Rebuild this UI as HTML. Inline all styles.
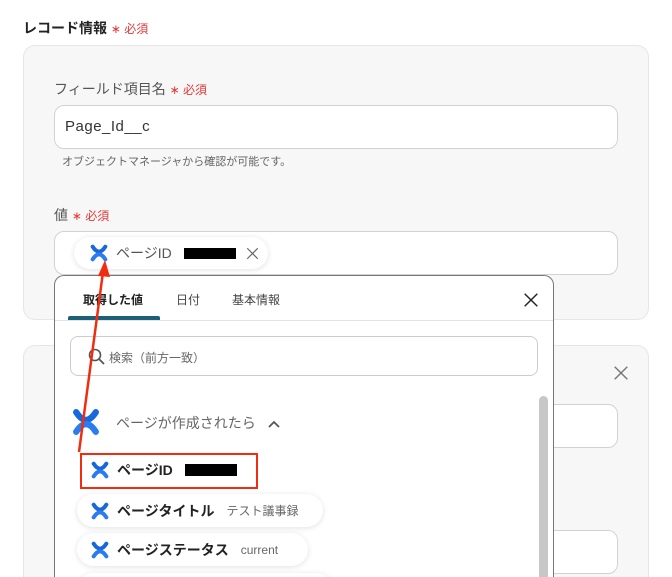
<!DOCTYPE html>
<html style="overflow:hidden;width:672px;height:577px"><head><meta charset="utf-8"><style>
*{box-sizing:border-box;margin:0;padding:0}
body{width:672px;height:577px;overflow:hidden;background:#fff;font-family:"Liberation Sans","Noto Sans CJK JP",sans-serif;color:#333;position:relative}
.abs{position:absolute}
.req{color:#e53935;font-size:12px}
.card{position:absolute;left:23px;width:626px;background:#f7f7f8;border:1px solid #e6e6e9;border-radius:12px}
.inp{position:absolute;left:54px;width:564px;height:44px;background:#fff;border:1px solid #cfd3d9;border-radius:10px}
.pill{position:absolute;background:#fff;border-radius:17px;box-shadow:0 1px 6px rgba(0,0,0,.12);height:33px;display:flex;align-items:center;padding-left:14px;font-size:14px;font-weight:bold;color:#222}
.pill .v{font-weight:normal;color:#666;font-size:12px;margin-left:12px}
.ic{width:18px;height:18px;margin-right:8px}
</style></head><body>
<svg width="0" height="0" style="position:absolute"><defs>
<symbol id="cf" viewBox="0 0 20 20"><path d="M3 3 Q10 14 17 3" fill="none" stroke="#1868db" stroke-width="4.5" stroke-linecap="round"/><path d="M3 17 Q10 6 17 17" fill="none" stroke="#2a7cf0" stroke-width="4.5" stroke-linecap="round"/></symbol>
<symbol id="x" viewBox="0 0 20 20"><path d="M3 3L17 17M17 3L3 17" stroke="currentColor" stroke-width="1.6"/></symbol>
</defs></svg>
<div class="abs" style="left:23px;top:18px;font-size:14px;font-weight:bold;color:#222">レコード情報 <span class="req" style="font-weight:normal">∗ 必須</span></div>
<div class="card" style="top:45px;height:275px"></div>
<div class="abs" style="left:54px;top:79px;font-size:14px;color:#555">フィールド項目名 <span class="req">∗ 必須</span></div>
<div class="inp" style="top:105px"><span class="abs" style="left:10px;top:12px;font-size:15px;color:#333;letter-spacing:.5px">Page_Id__c</span></div>
<div class="abs" style="left:62px;top:153px;font-size:11px;color:#666">オブジェクトマネージャから確認が可能です。</div>
<div class="abs" style="left:54px;top:205px;font-size:14px;color:#555">値 <span class="req">∗ 必須</span></div>
<div class="inp" style="top:231px"></div>
<div class="pill" style="left:74px;top:237px;width:194px;height:32px;font-weight:normal;color:#555;padding-left:16px"><svg class="ic"><use href="#cf"/></svg>ページID<span style="display:inline-block;width:52px;height:11px;background:#000;margin-left:12px"></span><svg style="margin-left:9px;color:#666" width="15" height="15"><use href="#x"/></svg></div>
<div class="card" style="top:345px;height:232px;border-bottom:none;border-radius:12px 12px 0 0"></div>
<svg class="abs" style="left:612px;top:364px;color:#777" width="18" height="18"><use href="#x"/></svg>
<div class="inp" style="top:404px"></div>
<div class="inp" style="top:530px"></div>
<div class="abs" style="left:54px;top:275px;width:500px;height:302px;background:#fff;border:1px solid #777;border-bottom:none;border-radius:10px 10px 0 0;overflow:hidden">
 <div class="abs" style="left:28px;top:15px;font-size:12px;font-weight:bold;color:#222">取得した値</div>
 <div class="abs" style="left:121px;top:15px;font-size:12px;color:#444">日付</div>
 <div class="abs" style="left:177px;top:15px;font-size:12px;color:#444">基本情報</div>
 <div class="abs" style="left:13px;top:40px;width:92px;height:4px;background:#1b5f79;border-radius:2px 2px 0 0"></div>
 <div class="abs" style="left:0;top:44px;width:498px;height:1px;background:#e3e3e3"></div>
 <svg class="abs" style="left:467px;top:15px;color:#222" width="18" height="18"><use href="#x"/></svg>
 <div class="abs" style="left:15px;top:60px;width:468px;height:40px;border:1px solid #ccc;border-radius:8px">
  <svg class="abs" style="left:17px;top:11px" width="18" height="18" viewBox="0 0 18 18"><circle cx="7" cy="7" r="5.5" fill="none" stroke="#555" stroke-width="1.6"/><path d="M11 11l5 5" stroke="#555" stroke-width="1.8"/></svg>
  <span class="abs" style="left:38px;top:12px;font-size:12px;color:#666">検索（前方一致）</span></div>
 <div class="abs" style="left:484px;top:120px;width:9px;height:200px;background:#c7c7c7;border-radius:5px"></div>
 <svg class="abs" style="left:17px;top:132px" width="28" height="28"><use href="#cf"/></svg>
 <div class="abs" style="left:61px;top:137px;font-size:14px;color:#666">ページが作成されたら</div>
 <svg class="abs" style="left:212px;top:143px" width="14" height="10"><path d="M2 8L7 3L12 8" fill="none" stroke="#555" stroke-width="1.8"/></svg>
 <div class="pill" style="left:22px;top:177px;width:180px;height:34px;box-shadow:none"><svg class="ic"><use href="#cf"/></svg>ページID<span style="display:inline-block;width:52px;height:12px;background:#000;margin-left:12px"></span></div>
 <div class="abs" style="left:25px;top:177px;width:178px;height:36px;border:2px solid #f02d10"></div>
 <div class="pill" style="left:22px;top:218px;width:246px"><svg class="ic"><use href="#cf"/></svg>ページタイトル<span class="v">テスト議事録</span></div>
 <div class="pill" style="left:22px;top:257px;width:231px"><svg class="ic"><use href="#cf"/></svg>ページステータス<span class="v">current</span></div>
 <div class="pill" style="left:22px;top:297px;width:256px"></div>
</div>
<svg class="abs" style="left:0;top:0" width="672" height="577"><path d="M79 452 L103 272" stroke="#f02d10" stroke-width="2.5"/><path d="M105 260 L98 276 L110 277Z" fill="#f02d10"/></svg>
</body></html>
